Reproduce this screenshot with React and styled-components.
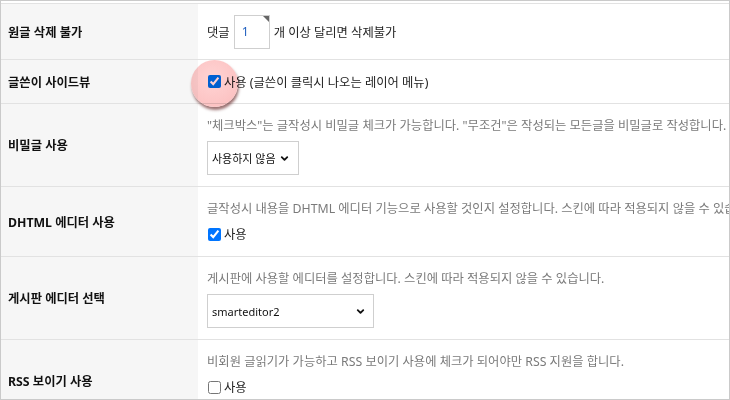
import { createGlobalStyle, styled } from "styled-components";
import { ChevronDown } from "lucide-react";

const GlobalStyle = createGlobalStyle`
    html, body {
        margin: 0;
        padding: 0;
        background: #fff;
    }
    body {
        font-family: "Noto Sans", "Noto Sans CJK KR", sans-serif;
        font-size: 12.3px;
        color: #222;
    }
`;

const Frame = styled.div`
    position: relative;
    width: 730px;
    height: 400px;
    box-sizing: border-box;
    border: 1px solid #cacaca;
    overflow: hidden;
    padding-top: 2px;
`;

const Table = styled.div`
    display: grid;
    grid-template-columns: 197px 1fr;
    width: 1000px;
`;

const Label = styled.div`
    background: #f6f6f6;
    border-top: 1px solid #e2e2e2;
    display: flex;
    align-items: center;
    padding-left: 7px;
    font-weight: 700;
    color: #111;
    height: ${(p) => p.$h}px;
    box-sizing: border-box;
`;

const Cell = styled.div`
    border-top: 1px solid #e2e2e2;
    padding: 10px 9px;
    height: ${(p) => p.$h}px;
    box-sizing: border-box;
    display: flex;
    flex-direction: column;
    justify-content: ${(p) => (p.$center ? "center" : "flex-start")};
    color: #222;
`;

const Desc = styled.div`
    color: #7a7a7a;
    line-height: 24px;
    white-space: nowrap;
`;

const Inline = styled.div`
    display: flex;
    align-items: center;
    gap: 4px;
    white-space: nowrap;
`;

const NumberBox = styled.span`
    position: relative;
    display: inline-flex;

    &::after {
        content: "";
        position: absolute;
        top: 1px;
        right: 1px;
        border-top: 6px solid #666;
        border-left: 6px solid transparent;
    }
`;

const NumberInput = styled.input`
    width: 36px;
    height: 34px;
    box-sizing: border-box;
    border: 1px solid #cfcfcf;
    padding: 0 7px;
    font: inherit;
    color: #1f5fbf;
    outline: none;
`;

const SelectWrap = styled.span`
    position: relative;
    display: inline-flex;
    width: ${(p) => p.$w}px;
    margin-top: 3px;

    svg {
        position: absolute;
        right: ${(p) => p.$arrow}px;
        top: 12px;
        pointer-events: none;
    }
`;

const Select = styled.select`
    appearance: none;
    width: 100%;
    height: 34px;
    box-sizing: border-box;
    border: 1px solid #cfcfcf;
    border-radius: 0;
    background: #fff;
    padding: 0 4px;
    font-family: inherit;
    font-size: 11px;
    color: #111;
`;

const CheckRow = styled.label`
    display: flex;
    align-items: center;
    gap: 3px;
    height: 22px;
    margin-top: ${(p) => (p.$flush ? 0 : 2)}px;
    white-space: nowrap;
    color: #222;

    input {
        margin: 0 0 0 1px;
        width: 13px;
        height: 13px;
    }
`;

const ClickMark = styled.div`
    position: absolute;
    left: 190px;
    top: 59px;
    width: 47px;
    height: 47px;
    border-radius: 50%;
    background: radial-gradient(circle at 45% 40%, #ffd4d4, #fbbcbc);
    mix-blend-mode: multiply;
    box-shadow: 1px 3px 3px rgba(90, 20, 20, 0.6);
    pointer-events: none;
`;

const App = () => {
    return (
        <>
            <GlobalStyle />
            <Frame>
                <Table>
                    <Label $h={56}>원글 삭제 불가</Label>
                    <Cell $h={56} $center>
                        <Inline>
                            댓글
                            <NumberBox>
                                <NumberInput defaultValue="1" />
                            </NumberBox>
                            개 이상 달리면 삭제불가
                        </Inline>
                    </Cell>

                    <Label $h={44}>글쓴이 사이드뷰</Label>
                    <Cell $h={44} $center>
                        <CheckRow $flush>
                            <input type="checkbox" defaultChecked />
                            사용 (글쓴이 클릭시 나오는 레이어 메뉴)
                        </CheckRow>
                    </Cell>

                    <Label $h={83}>비밀글 사용</Label>
                    <Cell $h={83}>
                        <Desc>"체크박스"는 글작성시 비밀글 체크가 가능합니다. "무조건"은 작성되는 모든글을 비밀글로 작성합니다. (관리자는 체크박스로 출력합니다.)</Desc>
                        <SelectWrap $w={92} $arrow={9}>
                            <Select defaultValue="0">
                                <option value="0">사용하지 않음</option>
                                <option value="1">체크박스</option>
                                <option value="2">무조건</option>
                            </Select>
                            <ChevronDown size={11} strokeWidth={4} color="#111" />
                        </SelectWrap>
                    </Cell>

                    <Label $h={70}>DHTML 에디터 사용</Label>
                    <Cell $h={70}>
                        <Desc>글작성시 내용을 DHTML 에디터 기능으로 사용할 것인지 설정합니다. 스킨에 따라 적용되지 않을 수 있습니다.</Desc>
                        <CheckRow>
                            <input type="checkbox" defaultChecked />
                            사용
                        </CheckRow>
                    </Cell>

                    <Label $h={83}>게시판 에디터 선택</Label>
                    <Cell $h={83}>
                        <Desc>게시판에 사용할 에디터를 설정합니다. 스킨에 따라 적용되지 않을 수 있습니다.</Desc>
                        <SelectWrap $w={167} $arrow={8}>
                            <Select defaultValue="smarteditor2">
                                <option value="smarteditor2">smarteditor2</option>
                                <option value="cheditor5">cheditor5</option>
                            </Select>
                            <ChevronDown size={11} strokeWidth={4} color="#111" />
                        </SelectWrap>
                    </Cell>

                    <Label $h={83}>RSS 보이기 사용</Label>
                    <Cell $h={83}>
                        <Desc>비회원 글읽기가 가능하고 RSS 보이기 사용에 체크가 되어야만 RSS 지원을 합니다.</Desc>
                        <CheckRow>
                            <input type="checkbox" />
                            사용
                        </CheckRow>
                    </Cell>
                </Table>
                <ClickMark />
            </Frame>
        </>
    );
};

export default App;
